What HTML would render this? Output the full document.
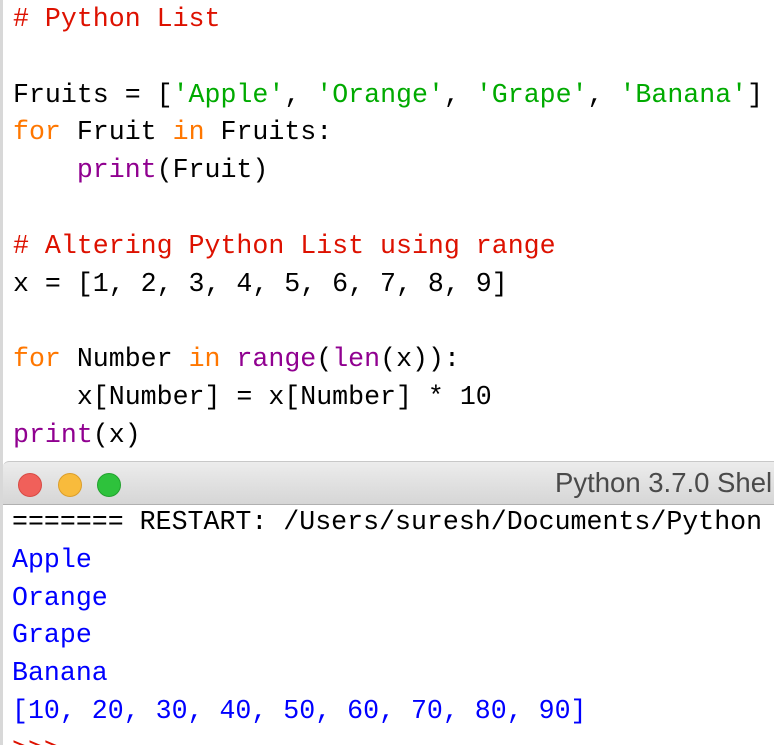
<!DOCTYPE html>
<html><head><style>
html,body{margin:0;padding:0;width:774px;height:745px;overflow:hidden;background:#fff;}
body{position:relative;font-family:"Liberation Mono",monospace;font-size:26.6px;}
.edge{position:absolute;left:0;top:0;width:3px;height:745px;background:#d8d8d8;}
pre{margin:0;font:inherit;line-height:37.8px;position:absolute;left:13px;white-space:pre;color:#000;}
.c{color:#dd1100}.k{color:#ff7700}.s{color:#00aa00}.b{color:#900090}.o{color:#0000ff}
.bar{position:absolute;left:3px;top:461px;width:780px;height:42px;background:linear-gradient(#ececec,#d6d6d6);border-top:1px solid #c8c8c8;border-bottom:1px solid #b0b0b0;border-radius:6px 0 0 0;}
.dot{position:absolute;top:11px;width:24px;height:24px;border-radius:50%;}
.title{position:absolute;top:5px;font-family:"Liberation Sans",sans-serif;font-size:27.5px;color:#4a4a4a;white-space:nowrap;}
</style></head><body>
<div class="edge"></div>
<pre style="top:1px"><span class="c"># Python List</span>

Fruits = [<span class="s">'Apple'</span>, <span class="s">'Orange'</span>, <span class="s">'Grape'</span>, <span class="s">'Banana'</span>]
<span class="k">for</span> Fruit <span class="k">in</span> Fruits:
    <span class="b">print</span>(Fruit)

<span class="c"># Altering Python List using range</span>
x = [1, 2, 3, 4, 5, 6, 7, 8, 9]

<span class="k">for</span> Number <span class="k">in</span> <span class="b">range</span>(<span class="b">len</span>(x)):
    x[Number] = x[Number] * 10
<span class="b">print</span>(x)</pre>
<div class="bar">
<div class="dot" style="left:15px;background:#f0605a;border:1px solid #d84a44;width:22px;height:22px"></div>
<div class="dot" style="left:55px;background:#f8bb3c;border:1px solid #dc9e2a;width:22px;height:22px"></div>
<div class="dot" style="left:94px;background:#2ec23c;border:1px solid #22a22e;width:22px;height:22px"></div>
<div class="title" style="left:552px">Python 3.7.0 Shel</div>
</div>
<pre style="top:504px;left:12px">======= RESTART: /Users/suresh/Documents/Python
<span class="o">Apple
Orange
Grape
Banana
[10, 20, 30, 40, 50, 60, 70, 80, 90]</span>
<span class="c">&gt;&gt;&gt;</span></pre>
</body></html>
